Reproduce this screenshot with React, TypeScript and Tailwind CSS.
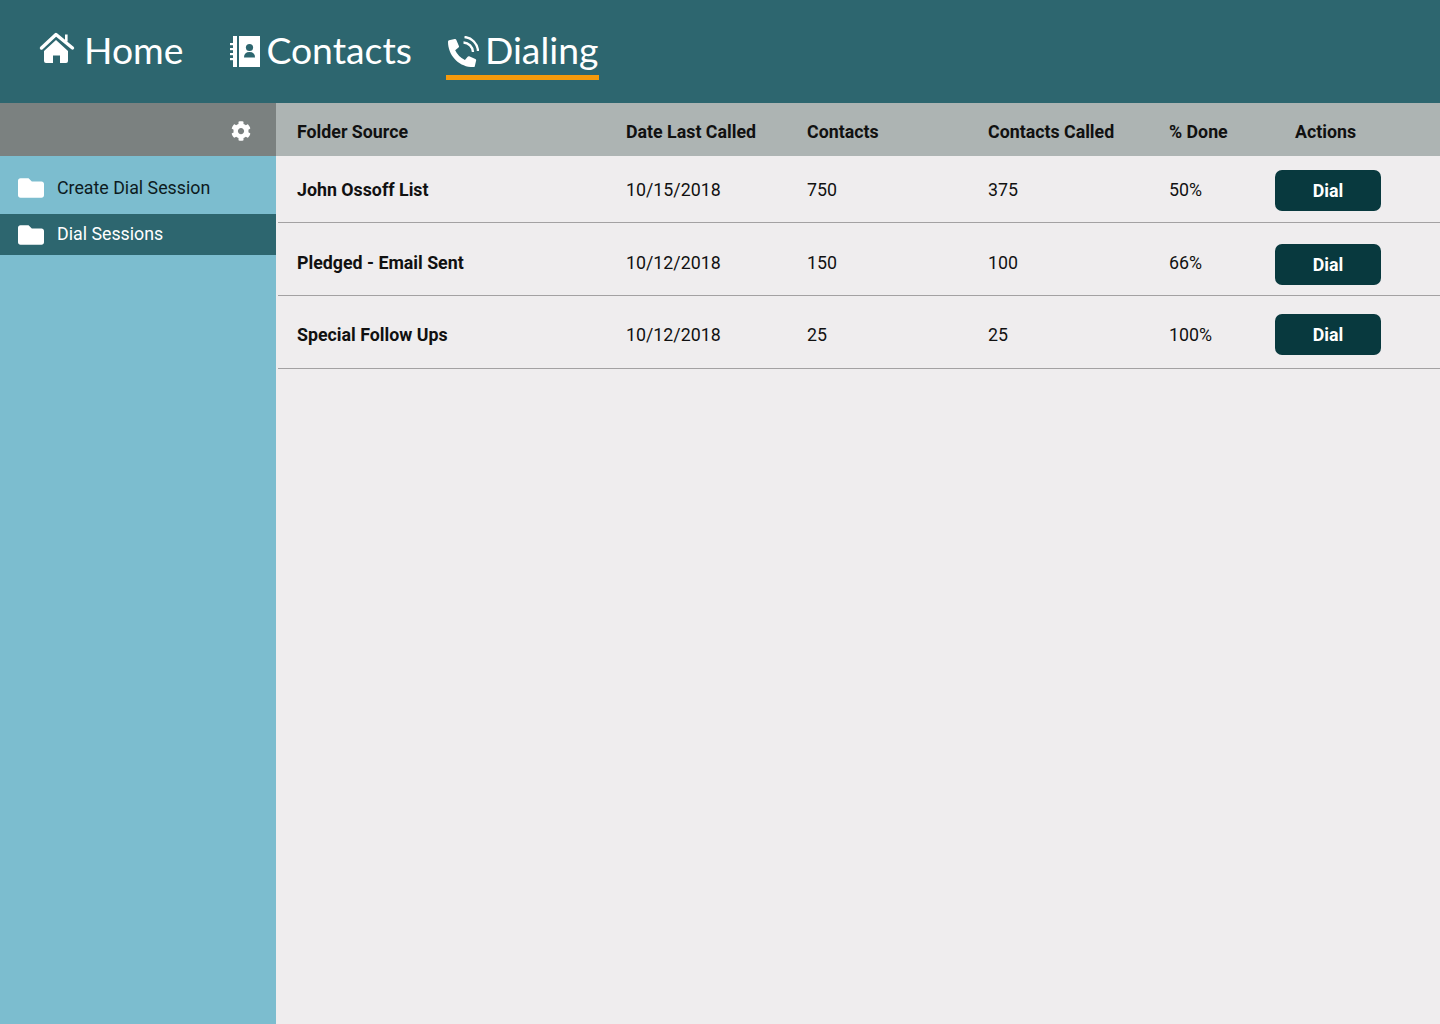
import { FaCog, FaFolder } from 'react-icons/fa'

const ROWS = [
  { name: 'John Ossoff List', date: '10/15/2018', contacts: '750', called: '375', done: '50%', pad: 'pt-[14px] pb-[11px]', text: '' },
  { name: 'Pledged - Email Sent', date: '10/12/2018', contacts: '150', called: '100', done: '66%', pad: 'pt-[21px] pb-[10px]', text: 'mb-[3px]' },
  { name: 'Special Follow Ups', date: '10/12/2018', contacts: '25', called: '25', done: '100%', pad: 'pt-[18px] pb-[13px]', text: 'mt-[1px]' },
]

const COLS = 'grid grid-cols-[329px_181px_181px_181px_106px_106px] items-center'
const NAV = 'mt-[28px] flex h-[52px] items-center border-b-[5px]'

function HomeIcon() {
  return (
    <svg width="36" height="36" viewBox="0 0 36 36" fill="currentColor" className="-mt-[6px]">
      <path d="M2.5 17 17 3.5 33.5 17" fill="none" stroke="currentColor" strokeWidth="3.4" strokeLinecap="round" strokeLinejoin="round" />
      <rect x="26" y="3.5" width="2.6" height="7" />
      <path d="M17 9 29 20v10a2 2 0 0 1-2 2h-6v-7.5h-7V32H7a2 2 0 0 1-2-2V20Z" />
    </svg>
  )
}

function BookIcon() {
  return (
    <svg width="30" height="31" viewBox="0 0 30 31" fill="currentColor" className="-mt-[1px]">
      <rect x="9" y="0" width="21" height="31" />
      <rect x="3" y="0" width="4" height="31" />
      <rect x="0" y="7" width="3" height="2.2" />
      <rect x="0" y="12" width="3" height="2.2" />
      <rect x="0" y="17" width="3" height="2.2" />
      <rect x="0" y="22" width="3" height="2.2" />
      <circle cx="19.5" cy="11.5" r="3.6" fill="#2d666f" />
      <path d="M14 21.5q0-5.5 5.5-5.5t5.5 5.5Z" fill="#2d666f" />
    </svg>
  )
}

function PhoneIcon() {
  return (
    <svg width="31" height="31" viewBox="0 0 31 31" fill="currentColor" className="-mt-[1px] shrink-0">
      <g transform="translate(0 3) scale(0.055) scale(-1 1) translate(-512 0)">
        <path d="M14.6 361.8l112-48a24 24 0 0 1 28 6.9l49.6 60.6A370.66 370.66 0 0 0 381.4 204.11l-60.6-49.6a23.94 23.94 0 0 1-6.9-28l48-112A24.16 24.16 0 0 1 389.4.61l104 24A24 24 0 0 1 512 48c0 256.5-207.9 464-464 464a24 24 0 0 1-23.4-18.6l-24-104a24.29 24.29 0 0 1 14-27.6z" />
      </g>
      <path d="M15.5 6.5a10 10 0 0 1 9.5 9.5" fill="none" stroke="currentColor" strokeWidth="2.4" />
      <path d="M16.5 1a15 15 0 0 1 13.5 14" fill="none" stroke="currentColor" strokeWidth="2.4" />
    </svg>
  )
}

export default function App() {
  return (
    <div className="flex min-h-[1024px] flex-col bg-[#efedee] font-['Roboto',sans-serif] text-[17.8px] text-[#111]">
      {/* Top nav */}
      <header className="flex h-[103px] items-start bg-[#2d666f] font-['Lato',sans-serif] text-[37.3px] font-normal text-white">
        <a className={`${NAV} ml-[39px] gap-[9px] border-transparent`}>
          <HomeIcon />
          <span className="-mt-[4px]">Home</span>
        </a>
        <a className={`${NAV} ml-[47px] gap-[6px] border-transparent`}>
          <BookIcon />
          <span className="-mt-[4px]">Contacts</span>
        </a>
        <a className={`${NAV} ml-[34px] w-[153px] gap-[6px] border-[#f59a0c] pl-[2px]`}>
          <PhoneIcon />
          <span className="-mt-[4px]">Dialing</span>
        </a>
      </header>

      <div className="flex flex-1">
        {/* Sidebar */}
        <aside className="w-[276px] bg-[#7cbdcf]">
          <div className="flex h-[53px] items-center justify-end bg-[#7b8180] pr-[25px]">
            <FaCog size={20} className="mt-[3px] text-white" />
          </div>
          <div className="flex h-[58px] items-center gap-[13px] pt-[6px] pl-[18px] text-[#0d1b1e]">
            <FaFolder size={26} className="text-white" />
            <span>Create Dial Session</span>
          </div>
          <div className="flex h-[41px] items-center gap-[13px] bg-[#2d666f] pl-[18px] text-white">
            <FaFolder size={26} className="text-white" />
            <span>Dial Sessions</span>
          </div>
        </aside>

        {/* Table */}
        <main className="flex-1">
          <div className={`${COLS} h-[53px] bg-[#adb4b3] pt-[5px] pl-[21px] font-bold`}>
            <div>Folder Source</div>
            <div>Date Last Called</div>
            <div>Contacts</div>
            <div>Contacts Called</div>
            <div>% Done</div>
            <div className="ml-[20px]">Actions</div>
          </div>
          <div className="ml-[2px]">
            {ROWS.map((r) => (
              <div key={r.name} className={`${COLS} border-b border-[#a3a1a2] pl-[19px] ${r.pad}`}>
                <div className={`font-bold ${r.text}`}>{r.name}</div>
                <div className={r.text}>{r.date}</div>
                <div className={r.text}>{r.contacts}</div>
                <div className={r.text}>{r.called}</div>
                <div className={r.text}>{r.done}</div>
                <button className="h-[41px] w-[106px] rounded-[7px] bg-[#08393e] pt-[1px] font-bold text-white">Dial</button>
              </div>
            ))}
          </div>
        </main>
      </div>
    </div>
  )
}
